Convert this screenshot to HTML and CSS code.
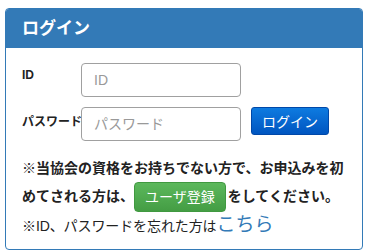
FILE: index.html
```html
<!DOCTYPE html>
<html lang="ja">
<head>
  <meta charset="UTF-8" />
  <meta name="viewport" content="width=device-width, initial-scale=1.0"/>
  <title>ログイン</title>
  <link rel="stylesheet" href="styles.css">
</head>
<body>

  <div class="panel">
    <div class="panel-heading">ログイン</div>
    <div class="panel-body">
      <div class="form-row">
        <label for="loginId">ID</label>
        <input type="text" id="loginId" placeholder="ID" />
      </div>
      <div class="form-row">
        <label for="loginPw">パスワード</label>
        <input type="password" id="loginPw" placeholder="パスワード" />
        <button class="btn-login">ログイン</button>
      </div>
      <p class="notice">※当協会の資格をお持ちでない方で、お申込みを初めてされる方は、<a class="btn-register" href="#">ユーザ登録</a>をしてください。</p>
      <p class="forgot">※ID、パスワードを忘れた方は<a href="#">こちら</a></p>
    </div>
  </div>

</body>
</html>
```

FILE: styles.css
```css
body {
  margin: 0;
  padding: 8px 5px 0;
  font-family: "Liberation Sans", "Noto Sans CJK JP", sans-serif;
  color: #222;
  background: #fff;
}
.panel {
  width: 356px;
  border: 1px solid #337ab7;
  border-radius: 4px;
  overflow: hidden;
}
.panel-heading {
  background: #337ab7;
  color: #fff;
  font-size: 17px;
  font-weight: bold;
  height: 39px;
  line-height: 39px;
  padding: 0 16px;
}
.panel-body {
  padding: 15px 16px 11px;
}
.form-row {
  display: flex;
  align-items: flex-start;
  margin-bottom: 10px;
}
.form-row label {
  width: 59px;
  font-size: 12px;
  font-weight: bold;
  padding-top: 5px;
  white-space: nowrap;
}
.form-row input {
  box-sizing: border-box;
  width: 160px;
  height: 34px;
  border: 1px solid #a0a0a0;
  border-radius: 4px;
  padding: 0 12px;
  font-size: 14px;
  font-family: "Liberation Sans", "Noto Sans CJK JP", sans-serif;
}
.form-row input::placeholder {
  color: #999;
}
.btn-login {
  box-sizing: border-box;
  margin-left: 10px;
  width: 78px;
  height: 28px;
  border: 1px solid #0048a8;
  border-radius: 3px;
  background: linear-gradient(#0e7be0, #0055c0);
  color: #fff;
  font-size: 14px;
  font-family: "Liberation Sans", "Noto Sans CJK JP", sans-serif;
  padding: 0;
}
.notice {
  margin: 14px 0 0;
  font-size: 14px;
  font-weight: bold;
  line-height: 27px;
}
.btn-register {
  display: inline-block;
  vertical-align: middle;
  margin: 0 2px 0 0;
  padding: 4px 10px;
  line-height: 20px;
  font-weight: normal;
  color: #fff;
  text-decoration: none;
  background: linear-gradient(#5cb85c, #449d44);
  border: 1px solid #409940;
  border-radius: 4px;
}
.forgot {
  margin: 1px 0 0;
  font-size: 14px;
  line-height: 24px;
  letter-spacing: -0.1px;
}
.forgot a {
  color: #337ab7;
  font-size: 19px;
  letter-spacing: 0;
  text-decoration: none;
}
```
